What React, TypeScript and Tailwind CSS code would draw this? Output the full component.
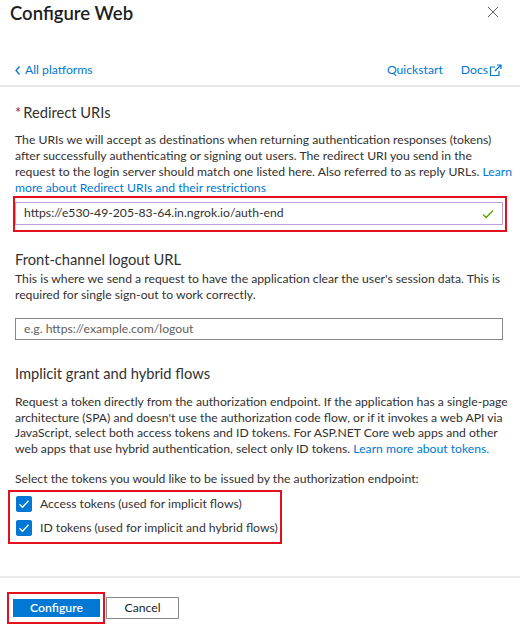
import React from 'react';

const font = "font-['Segoe_UI',Lato,'Liberation_Sans',sans-serif]";

const Check = () => (
  <svg width="12" height="10" viewBox="0 0 12 10" fill="none">
    <path d="M1.5 5.2l3 3 6-6.5" stroke="white" strokeWidth="1.3" />
  </svg>
);

const Checkbox: React.FC<{ label: string }> = ({ label }) => (
  <label className="flex items-center h-[24px]">
    <span className="w-[16px] h-[16px] rounded-[2px] bg-[#0078d4] flex items-center justify-center ml-[6px] mr-[8px]">
      <Check />
    </span>
    <span className="text-[12.2px] text-[#323130] whitespace-nowrap">{label}</span>
  </label>
);

export default function App() {
  return (
    <div className={`w-[520px] h-[628px] bg-white overflow-hidden ${font} text-[#323130]`}>
      {/* header */}
      <div className="flex justify-between items-center h-[26px] pl-[10px] pr-[21px]">
        <h1 className="text-[18.5px] leading-[26px] font-semibold text-[#201f1e]">Configure Web</h1>
        <svg width="12" height="12" viewBox="0 0 12 12" className="mt-[-2px]">
          <path d="M1 1l10 10M11 1L1 11" stroke="#605e5c" strokeWidth="1" />
        </svg>
      </div>

      <div className="flex justify-between items-center mt-[36px] h-[16px] pl-[15px] pr-[18px] text-[12.2px] text-[#0078d4]">
        <a className="flex items-center gap-[5px]">
          <svg width="5" height="9" viewBox="0 0 5 9">
            <path d="M4.5 0.5L1 4.5l3.5 4" stroke="#0078d4" strokeWidth="1.3" fill="none" />
          </svg>
          All platforms
        </a>
        <div className="flex items-center gap-[18px]">
          <a>Quickstart</a>
          <a className="flex items-center">
            Docs
            <svg width="13" height="13" viewBox="0 0 13 13" fill="none" className="ml-[1px]">
              <path d="M6 3H1.5v8.5H10V7" stroke="#0078d4" strokeWidth="1.2" />
              <path d="M6 7l6-6M8 1h4v4" stroke="#0078d4" strokeWidth="1.2" />
            </svg>
          </a>
        </div>
      </div>

      <div className="mt-[7px] h-[2px] bg-[#e8e8e8]" />

      {/* redirect uris */}
      <div className="pl-[15px]">
        <h2 className="mt-[15px] text-[14.7px] leading-[20px]">
          <span className="text-[#a4262c] mr-[2px]">*</span>Redirect URIs
        </h2>
        <p className="mt-[10px] text-[12.2px] leading-[16px] whitespace-nowrap">
          The URIs we will accept as destinations when returning authentication responses (tokens)<br />
          after successfully authenticating or signing out users. The redirect URI you send in the<br />
          request to the login server should match one listed here. Also referred to as reply URLs.{' '}
          <a className="text-[#0078d4]">Learn</a>
          <br />
          <a className="text-[#0078d4]">more about Redirect URIs and their restrictions</a>
        </p>
      </div>

      <div className="ml-[13px] w-[494px] h-[36px] border-2 border-[#e3101e] pt-[4px]">
        <div className="w-[488px] h-[23px] border border-[#c19fd6] flex items-center justify-between pl-[8px] pr-[8px] text-[12.2px]">
          <span>https://e530-49-205-83-64.in.ngrok.io/auth-end</span>
          <svg width="12" height="10" viewBox="0 0 12 10" fill="none">
            <path d="M1 5.5l3.2 3L11 1.5" stroke="#57a300" strokeWidth="1.3" />
          </svg>
        </div>
      </div>

      {/* logout url */}
      <div className="pl-[15px]">
        <h2 className="mt-[17px] text-[14.7px] leading-[20px]">Front-channel logout URL</h2>
        <p className="mt-[2px] text-[12.2px] leading-[15.5px] whitespace-nowrap">
          This is where we send a request to have the application clear the user's session data. This is<br />
          required for single sign-out to work correctly.
        </p>
        <div className="mt-[16px] w-[488px] h-[22px] border border-[#8a8886] flex items-center pl-[8px] text-[12.2px] text-[#605e5c]">
          e.g. https://example.com/logout
        </div>

        {/* implicit grant */}
        <h2 className="mt-[23px] text-[14.7px] leading-[20px]">Implicit grant and hybrid flows</h2>
        <p className="mt-[11px] text-[12.2px] leading-[15.7px] whitespace-nowrap">
          Request a token directly from the authorization endpoint. If the application has a single-page<br />
          architecture (SPA) and doesn't use the authorization code flow, or if it invokes a web API via<br />
          JavaScript, select both access tokens and ID tokens. For ASP.NET Core web apps and other<br />
          web apps that use hybrid authentication, select only ID tokens.{' '}
          <a className="text-[#0078d4]">Learn more about tokens.</a>
        </p>
        <p className="mt-[14px] text-[12.2px] leading-[16px]">
          Select the tokens you would like to be issued by the authorization endpoint:
        </p>
      </div>

      <div className="ml-[8px] mt-[3px] w-[274px] h-[54px] border-2 border-[#e3101e] pt-[0px]">
        <Checkbox label="Access tokens (used for implicit flows)" />
        <Checkbox label="ID tokens (used for implicit and hybrid flows)" />
      </div>

      <div className="mt-[32px] h-[2px] bg-[#ebebeb]" />

      {/* footer */}
      <div className="flex items-center mt-[14px] pl-[7px]">
        <div className="w-[98px] h-[32px] border-2 border-[#e3101e] flex items-center pl-[4px]">
          <button className="w-[87px] h-[18px] bg-[#0078d4] text-white text-[12.2px] font-semibold leading-[18px]">
            Configure
          </button>
        </div>
        <button className="ml-[1px] w-[73px] h-[22px] border border-[#8a8886] bg-white text-[12.2px] leading-[20px] text-[#201f1e]">
          Cancel
        </button>
      </div>
    </div>
  );
}
